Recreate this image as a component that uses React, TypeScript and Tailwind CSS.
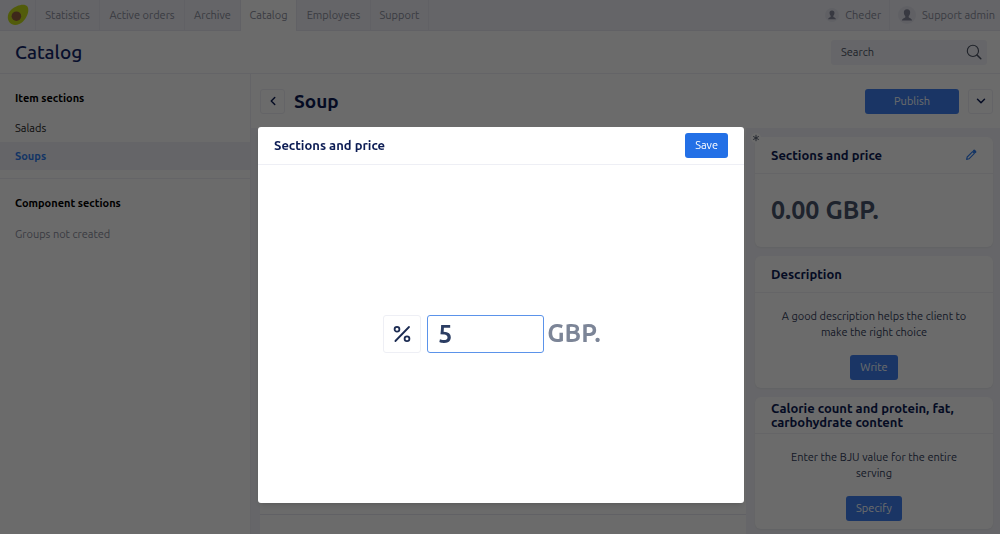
import React, { useState } from "react";
import { ChevronDown, ChevronLeft } from "lucide-react";

type Tab = {
  title: string;
  width: string;
};

const tabs: Tab[] = [
  { title: "Statistics", width: "w-16" },
  { title: "Active orders", width: "w-[85px]" },
  { title: "Archive", width: "w-14" },
  { title: "Catalog", width: "w-14" },
  { title: "Employees", width: "w-[74px]" },
  { title: "Support", width: "w-[58px]" },
];

const sections = ["Salads", "Soups"];

const Logo: React.FC = () => (
  <svg viewBox="0 0 22 22" className="h-[22px] w-[22px]" aria-hidden="true">
    <path
      d="M20.4 2.6C22.8 6.2 20.2 13.6 16 17.6 12 21.6 5.6 22.2 2.6 18.6-.2 15.2.2 9.6 4.2 5.8 8.6 1.6 17.6-1.4 20.4 2.6z"
      fill="#c3dc1c"
    />
    <circle cx="9.4" cy="12.2" r="4.8" fill="#94603f" />
  </svg>
);

const Avatar: React.FC<{ className: string }> = ({ className }) => (
  <svg viewBox="0 0 20 20" className={className} aria-hidden="true">
    <circle cx="10" cy="10" r="10" fill="#e4e5ef" />
    <path
      d="M10 3.6c2.4 0 3.7 1.6 3.5 3.9-.1 1.6-.8 2.9-1.6 3.7v1.3c.2.9 3.4 1.2 3.8 3.6H4.3c.4-2.4 3.6-2.7 3.8-3.6v-1.3c-.8-.8-1.5-2.1-1.6-3.7C6.3 5.2 7.6 3.6 10 3.6z"
      fill="#85889b"
    />
  </svg>
);

const SearchIcon: React.FC = () => (
  <svg viewBox="0 0 16 16" className="h-4 w-4" fill="none" stroke="#4b5264" aria-hidden="true">
    <circle cx="6.9" cy="6.9" r="5.6" strokeWidth="1.1" />
    <path d="M11 11l3.8 3.8" strokeWidth="1.5" strokeLinecap="round" />
  </svg>
);

const PencilIcon: React.FC = () => (
  <svg viewBox="0 0 12 12" className="h-3 w-3" fill="none" stroke="#2f7df0" aria-hidden="true">
    <path d="M1.6 10.4l.6-2.4 5.4-5.4 1.8 1.8L4 9.8z" strokeWidth="1.1" strokeLinejoin="round" />
    <path d="M9.2 1.9l.9.9" strokeWidth="2.6" strokeLinecap="round" />
  </svg>
);

const PercentIcon: React.FC = () => (
  <svg viewBox="0 0 18 18" className="h-[18px] w-[18px]" fill="none" stroke="#1b2b52" strokeWidth="1.8" aria-hidden="true">
    <circle cx="4" cy="4.2" r="2.4" />
    <circle cx="14" cy="13.8" r="2.4" />
    <path d="M16 2L2.4 16" strokeLinecap="round" />
  </svg>
);

const Button: React.FC<{ className?: string; onClick?: () => void; children: React.ReactNode }> = ({
  className = "",
  onClick,
  children,
}) => (
  <button
    type="button"
    onClick={onClick}
    className={`h-[25px] rounded-[3px] text-[11px] text-white ${className}`}
  >
    {children}
  </button>
);

const Card: React.FC<{ title: string; action?: React.ReactNode; children: React.ReactNode }> = ({
  title,
  action,
  children,
}) => (
  <section className="rounded-md bg-white shadow-xs">
    <header className="flex h-[37px] items-center justify-between border-b border-[#f0f1f6] px-4">
      <h3 className="text-[13px] leading-[14px] font-bold text-[#0c1c54]">{title}</h3>
      {action}
    </header>
    {children}
  </section>
);

const App: React.FC = () => {
  const [activeTab, setActiveTab] = useState<string>("Catalog");
  const [activeSection, setActiveSection] = useState<string>("Soups");
  const [price, setPrice] = useState<string>("5");
  const [isOpen, setIsOpen] = useState<boolean>(true);

  return (
    <div className="flex min-h-screen flex-col bg-white font-['Ubuntu','Noto_Sans',sans-serif] text-[11px] text-[#33405c]">
      {/* Top navigation */}
      <nav className="flex h-[31px] border-b border-[#e6e7f0] bg-[#f0f1f8] text-[#8a8d9c]">
        <a href="#home" aria-label="Home" className="flex w-9 items-center justify-center border-r border-[#e6e7f0]">
          <Logo />
        </a>
        {tabs.map((tab) => (
          <a
            key={tab.title}
            href={`#${tab.title}`}
            onClick={() => setActiveTab(tab.title)}
            className={`flex items-center justify-center border-r border-[#e6e7f0] whitespace-nowrap ${tab.width} ${
              activeTab === tab.title ? "-mb-px bg-white" : ""
            }`}
          >
            {tab.title}
          </a>
        ))}
        <a href="#cheder" className="ml-auto flex items-center gap-1.5 border-r border-[#e6e7f0] px-2">
          <Avatar className="h-3.5 w-3.5" />
          Cheder
        </a>
        <a href="#profile" className="flex items-center gap-1.5 pr-[5px] pl-2 whitespace-nowrap">
          <Avatar className="h-[18px] w-[18px]" />
          Support admin
        </a>
      </nav>

      {/* Page title */}
      <div className="flex h-[43px] items-center justify-between border-b border-[#eeeff5] pr-[13px] pl-[15px]">
        <h1 className="text-[19px] font-medium text-[#12266a]">Catalog</h1>
        <label className="flex h-[25px] w-[156px] items-center rounded-[3px] bg-[#f3f4f9] pr-[5px] pl-2.5">
          <input
            type="text"
            aria-label="Search"
            placeholder="Search"
            className="min-w-0 flex-1 outline-none placeholder:text-[#4b5264]"
          />
          <SearchIcon />
        </label>
      </div>

      <div className="flex flex-1">
        {/* Sidebar */}
        <aside className="w-[251px] shrink-0 border-r border-[#eeeff5] pt-4">
          <h2 className="px-[15px] leading-4 font-bold text-black">Item sections</h2>
          <ul className="mt-2 border-b border-[#eeeff5] pb-2">
            {sections.map((section) => (
              <li key={section}>
                <button
                  type="button"
                  onClick={() => setActiveSection(section)}
                  className={`h-7 w-full px-[15px] text-left ${
                    activeSection === section ? "bg-[#f0f1f8] font-bold text-[#2f7df0]" : "text-[#222]"
                  }`}
                >
                  {section}
                </button>
              </li>
            ))}
          </ul>
          <h2 className="mt-4 px-[15px] leading-4 font-bold text-black">Component sections</h2>
          <p className="mt-[15px] px-[15px] leading-4 text-[#8a8d9c]">Groups not created</p>
        </aside>

        {/* Item */}
        <main className="flex min-w-0 flex-1 flex-col">
          <div className="flex h-[54px] items-center pr-[7px] pl-[9px]">
            <button
              type="button"
              aria-label="Back"
              className="flex h-[25px] w-[25px] items-center justify-center rounded-[3px] border border-[#eeeff5]"
            >
              <ChevronLeft size={14} strokeWidth={2.5} color="#0c1c54" />
            </button>
            <h2 className="ml-[9px] text-[19px] font-bold text-[#0c1c54]">Soup</h2>
            <Button className="mr-[9px] ml-auto w-[94px] bg-[#3e7ff0]">Publish</Button>
            <button
              type="button"
              aria-label="More actions"
              className="flex h-[25px] w-[25px] items-center justify-center rounded-[3px] border border-[#eeeff5]"
            >
              <ChevronDown size={14} strokeWidth={2.5} color="#0c1c54" />
            </button>
          </div>

          <div className="flex flex-1 items-stretch gap-[9px] bg-[#f3f4f9] pr-[7px] pl-[9px]">
            <section className="flex flex-1 flex-col justify-end bg-white">
              <div className="h-5 border-t border-[#e6e7f0]" />
            </section>

            <div className="flex w-[238px] shrink-0 flex-col gap-[9px] pt-[9px] pb-1">
              <div className="relative">
                <span className="absolute -top-1 -left-1 flex h-2.5 w-2.5 items-center justify-center rounded-full bg-white text-[#5c6475]">
                  <svg viewBox="0 0 8 8" className="h-2 w-2" stroke="currentColor" strokeWidth="1" aria-hidden="true">
                    <path d="M4 .8v6.4M1.2 2.4l5.6 3.2M6.8 2.4L1.2 5.6" />
                  </svg>
                </span>
                <Card
                  title="Sections and price"
                  action={
                    <button type="button" aria-label="Edit price">
                      <PencilIcon />
                    </button>
                  }
                >
                  <p className="flex h-[73px] items-center px-4 text-[25px] font-bold text-[#48546c]">0.00 GBP.</p>
                </Card>
              </div>
              <Card title="Description">
                <div className="flex flex-col items-center px-5 pt-[15px] pb-2">
                  <p className="text-center leading-4">A good description helps the client to make the right choice</p>
                  <Button className="mt-[15px] bg-[#3e7ff0] px-2.5">Write</Button>
                </div>
              </Card>
              <Card title="Calorie count and protein, fat, carbohydrate content">
                <div className="flex flex-col items-center px-5 pt-[15px] pb-2">
                  <p className="text-center leading-4">Enter the BJU value for the entire serving</p>
                  <Button className="mt-[15px] bg-[#3e7ff0] px-2.5">Specify</Button>
                </div>
              </Card>
            </div>
          </div>
        </main>
      </div>

      {/* Price dialog */}
      {isOpen && (
        <div className="fixed inset-0 flex items-start justify-center bg-black/58 pt-[127px] pl-0.5">
          <div
            role="dialog"
            aria-modal="true"
            aria-labelledby="price-title"
            className="flex h-[376px] w-[486px] flex-col rounded-[3px] bg-white shadow-md"
          >
            <header className="flex h-[38px] items-center justify-between border-b border-[#eeeff5] px-4">
              <h2 id="price-title" className="text-[13px] font-bold text-[#0c1c54]">
                Sections and price
              </h2>
              <Button className="bg-[#2370e6] px-2.5" onClick={() => setIsOpen(false)}>
                Save
              </Button>
            </header>
            <div className="flex flex-1 items-center justify-center pr-[18px] text-[25px] font-bold">
              <button
                type="button"
                aria-label="Percent"
                className="mr-1.5 flex h-[38px] w-[38px] items-center justify-center rounded-[3px] border border-[#eeeff5]"
              >
                <PercentIcon />
              </button>
              <input
                id="price"
                type="text"
                value={price}
                onChange={(e) => setPrice(e.target.value)}
                className="h-[38px] w-[117px] rounded-[3px] border border-[#5b93ea] px-2.5 text-[#2b3d63] outline-none"
              />
              <label htmlFor="price" className="ml-[3px] text-[#7c8597]">
                GBP.
              </label>
            </div>
          </div>
        </div>
      )}
    </div>
  );
};

export default App;
